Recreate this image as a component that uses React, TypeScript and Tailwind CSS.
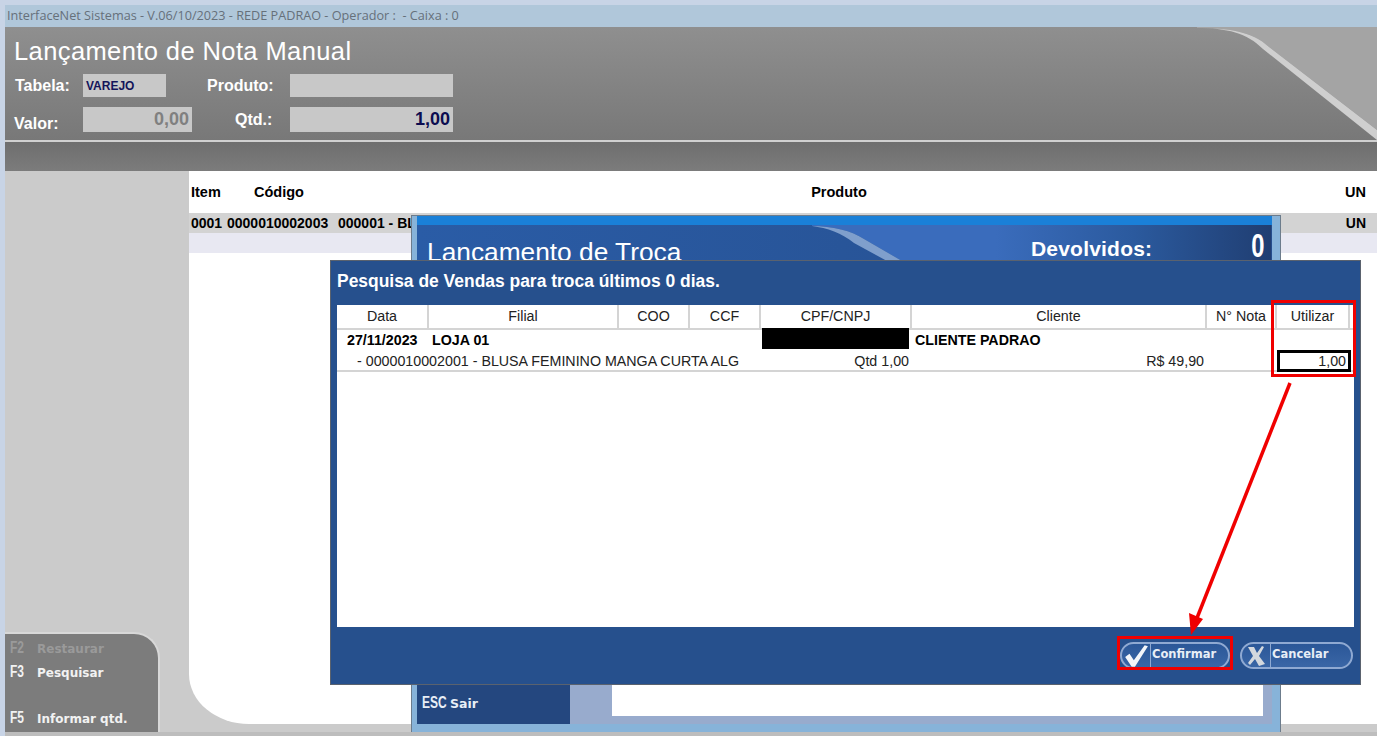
import React from 'react';

const cols = 'grid grid-cols-[92px_190px_71px_71px_151px_295px_70px_73px]';

const headers = ['Data', 'Filial', 'COO', 'CCF', 'CPF/CNPJ', 'Cliente', 'N° Nota', 'Utilizar'];

const keys = [
  { key: 'F2', label: 'Restaurar', className: 'text-[#9a9a9a] h-[24px]' },
  { key: 'F3', label: 'Pesquisar', className: 'text-[#f2f2f2] h-[46px]' },
  { key: 'F5', label: 'Informar qtd.', className: 'text-[#f2f2f2] h-[24px]' },
];

// condensed key cap used on the F-key and ESC labels
const KeyCap: React.FC<{ children: React.ReactNode; className?: string }> = ({ children, className }) => (
  <span className={`inline-block origin-left scale-x-[0.75] text-[16px] font-bold leading-[15px] [font-family:'Liberation_Sans',sans-serif] ${className ?? ''}`}>
    {children}
  </span>
);

const PillButton: React.FC<{ label: string; width: string; icon: React.ReactNode }> = ({ label, width, icon }) => (
  <div className={`flex h-[27px] items-center rounded-full border-2 border-[#8fa9d2] bg-gradient-to-b from-[#2b5798] to-[#3a66a6] text-[11.5px] font-bold text-[#e8eef6] [font-family:'DejaVu_Sans',sans-serif] ${width}`}>
    <div className="flex h-full w-[29px] shrink-0 items-center justify-center border-r border-[#8fa9d2]">{icon}</div>
    <span className="pb-[1px] pl-[1px]">{label}</span>
  </div>
);

export default function App() {
  return (
    <div className="relative flex h-[736px] w-[1377px] flex-col overflow-hidden bg-[#c8d4e6] pl-[5px] pt-[5px] text-black [font-family:'Liberation_Sans',Arial,sans-serif]">
      {/* Title bar */}
      <div className="flex h-[22px] shrink-0 items-center bg-[#b0c7da] pl-[2px] text-[12.68px] text-[#66707a] [font-family:'Open_Sans',sans-serif]">
        InterfaceNet Sistemas - V.06/10/2023 - REDE PADRAO - Operador : &nbsp;- Caixa : 0
      </div>

      {/* Header */}
      <div className="relative h-[113px] shrink-0 overflow-hidden bg-gradient-to-b from-[#8f8f8f] to-[#787878] pl-[9px] pt-[9px] text-white">
        <svg className="absolute right-0 top-0" width="180" height="113" viewBox="0 0 180 113">
          <path d="M0 1 C30 1 55 4 72 20 L180 103 V0 H0 Z" fill="#a4a4a4" />
          <path d="M0 1 C30 1 50 6 66 22 L180 113 V103 L72 20 C55 4 30 1 0 1 Z" fill="#cfcfcf" />
        </svg>
        <h1 className="relative h-[30px] text-[25.5px] leading-[30px] tracking-[0.4px]">Lançamento de Nota Manual</h1>
        <div className="relative mt-[8px] grid grid-cols-[69px_124px_83px_163px] grid-rows-[23px_25px] gap-y-[10px] text-[16px] font-bold">
          <span className="flex items-center pl-[1px]">Tabela:</span>
          <div className="flex w-[83px] items-center bg-[#c8c8c8] pl-[3px] text-[12px] text-[#14145a]">VAREJO</div>
          <span className="flex items-center">Produto:</span>
          <div className="bg-[#c8c8c8]" />
          <span className="flex items-center pt-[8px]">Valor:</span>
          <div className="flex w-[109px] items-center justify-end bg-[#c8c8c8] pr-[3px] text-[18px] text-[#808080]">0,00</div>
          <span className="flex items-center pl-[28px]">Qtd.:</span>
          <div className="flex items-center justify-end bg-[#c8c8c8] pr-[3px] text-[18px] text-[#0c0c50]">1,00</div>
        </div>
      </div>
      <div className="h-[2px] shrink-0 bg-[#d0d0d0]" />
      <div className="h-[29px] shrink-0 bg-gradient-to-b from-[#6e6e6e] to-[#7c7c7c]" />

      {/* Body */}
      <div className="flex flex-1 bg-[#cbcbcb]">
        {/* Left column */}
        <aside className="flex w-[184px] shrink-0 flex-col justify-end">
          <div className="h-[100px] w-[155px] rounded-tr-[26px] border-r-2 border-t-2 border-[#d8d8d8] bg-[#7c7c7c] pl-[5px] pt-[6px] text-[12px] font-bold [font-family:'DejaVu_Sans',sans-serif]">
            {keys.map((k) => (
              <div key={k.key} className={`flex items-start ${k.className}`}>
                <span className="w-[27px]">
                  <KeyCap>{k.key}</KeyCap>
                </span>
                <span>{k.label}</span>
              </div>
            ))}
          </div>
        </aside>

        {/* Items list */}
        <main className="mb-[8px] flex-1 rounded-bl-[60px_50px] bg-white text-[14px] font-bold">
          <div className="grid h-[42px] grid-cols-[63px_98px_1fr_40px] items-center pl-[2px] pr-[11px] pt-[1px] text-[14.5px]">
            <span>Item</span>
            <span>Código</span>
            <span className="text-center">Produto</span>
            <span className="text-right">UN</span>
          </div>
          <div className="flex h-[20px] items-center bg-[#d3d3d3] pl-[2px] pr-[11px]">
            <span className="w-[36px]">0001</span>
            <span className="w-[111px]">0000010002003</span>
            <span>000001 - BL</span>
            <span className="ml-auto">UN</span>
          </div>
          <div className="h-[20px] bg-[#e8e8f2]" />
        </main>
      </div>
      <div className="h-[4px] shrink-0 bg-[#bdbdbd]" />

      {/* Back window: Lancamento de Troca */}
      <section className="absolute left-[411px] top-[215px] flex h-[517px] w-[870px] flex-col border-x border-t border-[#6c7c8c] bg-[#87b3d9] pb-[8px] pl-[5px] pr-[8px]">
        <div className="h-[9px] shrink-0 bg-[#1a80d8]" />
        <div className="relative flex h-[60px] shrink-0 bg-gradient-to-r from-[#2a5ca6] to-[#264e8c] pl-[10px] pt-[11px] text-white">
          <span className="relative text-[26.3px] leading-[32px]">Lancamento de Troca</span>
          <svg className="absolute left-[395px] top-0" width="459" height="60" viewBox="0 0 459 60">
            <defs>
              <linearGradient id="troca" x1="0" y1="0" x2="1" y2="0">
                <stop offset="0" stopColor="#3a6cbc" />
                <stop offset="0.4" stopColor="#3a6cbc" />
                <stop offset="0.7" stopColor="#2b5a9e" />
                <stop offset="1" stopColor="#203e72" />
              </linearGradient>
            </defs>
            <path d="M0 1 C20 1 40 6 52 14 L90 36 L130 60 H459 V0 H0 Z" fill="url(#troca)" />
            <path d="M0 1 C20 1 40 6 52 14 L90 36 L100 60 H80 L75 36 L42 18 C30 8 15 3 0 1 Z" fill="#7f9fcc" />
          </svg>
          <span className="absolute left-[614px] top-[8px] text-[21px] font-bold tracking-[0.2px]">Devolvidos:</span>
          <span className="absolute right-[8px] top-[4px] origin-right scale-x-[0.72] text-[33px] font-bold leading-[33px]">0</span>
        </div>
        <div className="flex-1 bg-[#98abcd]" />
        <div className="flex h-[39px] shrink-0 bg-[#98abcd]">
          <div className="flex w-[153px] items-center bg-[#24477f] pl-[5px] text-[12.5px] font-bold text-[#e8eef6] [font-family:'DejaVu_Sans',sans-serif]">
            <span className="w-[28px]">
              <KeyCap>ESC</KeyCap>
            </span>
            <span>Sair</span>
          </div>
          <div className="mb-[8px] ml-[42px] mr-[9px] flex-1 bg-white" />
        </div>
      </section>

      {/* Front window: Pesquisa de Vendas */}
      <section className="absolute left-[330px] top-[260px] flex h-[425px] w-[1031px] flex-col border border-[#5a626e] bg-[#26508d] px-[6px]">
        <h2 className="flex h-[44px] shrink-0 items-center pb-[4px] text-[17.45px] font-bold text-white">
          Pesquisa de Vendas para troca últimos 0 dias.
        </h2>
        <div className="h-[322px] shrink-0 bg-white text-[14.26px] text-[#222]">
          <div className={`${cols} h-[25px] border-b-2 border-[#d4d4d4]`}>
            {headers.map((h) => (
              <div key={h} className="flex items-center justify-center border-r-2 border-[#d4d4d4]">
                {h}
              </div>
            ))}
          </div>
          <div className={`${cols} h-[20px] font-bold text-black`}>
            <span className="pl-[10px] leading-[20px]">27/11/2023</span>
            <span className="pl-[3px] leading-[20px]">LOJA 01</span>
            <span />
            <span />
            <div className="-mt-[2px] ml-[1px] h-[21px] w-[147px] bg-black" />
            <span className="pl-[3px] leading-[20px]">CLIENTE PADRAO</span>
          </div>
          <div className="grid h-[22px] grid-cols-[575px_295px_70px_73px] border-b-2 border-[#d4d4d4] leading-[22px]">
            <div className="flex justify-between pl-[20px] pr-[3px]">
              <span>- 0000010002001 - BLUSA FEMININO MANGA CURTA ALG</span>
              <span>Qtd 1,00</span>
            </div>
            <span className="pr-[3px] text-right">R$ 49,90</span>
            <span />
            <div className="h-[22px] w-[74px] border-[3px] border-black pr-[2px] text-right leading-[17px]">1,00</div>
          </div>
        </div>
        <div className="flex flex-1 items-center justify-end gap-[10px] pr-[1px]">
          <PillButton
            label="Confirmar"
            width="w-[110px]"
            icon={
              <svg width="26" height="24" viewBox="0 0 24 22">
                <path d="M2 12 L6 9 L10 15 L20 1 L23 2 L11 21 L8 21 Z" fill="#f4f6fa" />
              </svg>
            }
          />
          <PillButton
            label="Cancelar"
            width="w-[113px]"
            icon={
              <svg width="22" height="22" viewBox="0 0 22 22">
                <path d="M3 2 L9 2 L12 8 L17 1 L19 2 L14 11 L20 19 L14 21 L10 14 L5 20 L3 18 L8 11 Z" fill="#d4d8dd" />
              </svg>
            }
          />
        </div>
      </section>

      {/* Red annotations */}
      <div className="absolute left-[1271px] top-[300px] h-[77px] w-[85px] border-[3px] border-[#f00000]" />
      <div className="absolute left-[1117px] top-[636px] h-[34px] w-[116px] border-[3px] border-[#f00000]" />
      <svg className="absolute left-0 top-0" width="1377" height="736" viewBox="0 0 1377 736">
        <path d="M1290 383 L1197 618" stroke="#f00000" strokeWidth="3.5" />
        <path d="M1191 635 L1189 613 L1203 619 Z" fill="#f00000" />
      </svg>
    </div>
  );
}
